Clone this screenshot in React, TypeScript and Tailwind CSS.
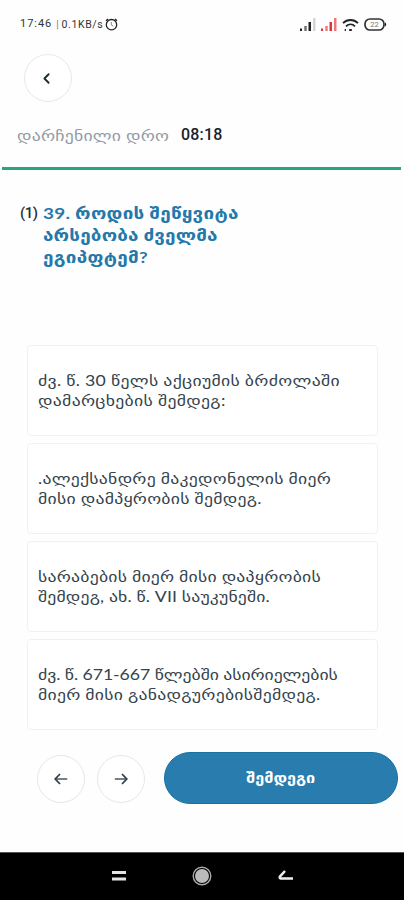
import { ChevronLeft } from "lucide-react";

interface TextLine {
  text: string;
  className: string;
}

const question: TextLine[] = [
  { text: "39. როდის შეწყვიტა", className: "tracking-[0.24px]" },
  { text: "არსებობა ძველმა", className: "tracking-[0.14px]" },
  { text: "ეგიპფტემ?", className: "tracking-[0.24px]" },
];

const answers: TextLine[][] = [
  [
    { text: "ძვ. წ. 30 წელს აქციუმის ბრძოლაში", className: "tracking-[0.26px]" },
    { text: "დამარცხების შემდეგ:", className: "tracking-[0.26px]" },
  ],
  [
    { text: ".ალექსანდრე მაკედონელის მიერ", className: "tracking-[0.22px]" },
    { text: "მისი დამპყრობის შემდეგ.", className: "tracking-[0.22px]" },
  ],
  [
    { text: "სარაბების მიერ მისი დაპყრობის", className: "tracking-[0.2px]" },
    { text: "შემდეგ, ახ. წ. VII საუკუნეში.", className: "tracking-[0.13px]" },
  ],
  [
    { text: "ძვ. წ. 671-667 წლებში ასირიელების", className: "tracking-[-0.05px]" },
    { text: "მიერ მისი განადგურებისშემდეგ.", className: "tracking-[0.22px]" },
  ],
];

function StatusBar() {
  return (
    <div className="flex h-[49px] items-center justify-between pr-[17px] pl-5 font-['Roboto','Liberation_Sans',sans-serif] text-[#333]">
      <div className="flex items-center text-[11px] whitespace-nowrap">
        <span className="tracking-[0.95px]">17:46</span>
        <span className="mr-[3px] ml-[4px] text-[10px] text-[#777]">|</span>
        <span className="text-[10.5px] tracking-[0.6px]">0.1KB/s</span>
        <svg className="ml-[2px]" width="13" height="13" viewBox="0 0 13 13" fill="none" stroke="#222" strokeWidth="1.3">
          <circle cx="6.5" cy="6.7" r="5.2" />
          <path d="M1 2.8 3 1M12 2.8 10 1" />
          <path d="M6.3 4v3l2 1" stroke="#888" strokeWidth="1" />
        </svg>
      </div>
      <div className="flex items-center">
        <SignalIcon color="#222" last="#d4d4d4" />
        <SignalIcon color="#df3438" last="#ee7779" />
        <svg className="mr-[5px]" width="17" height="14" viewBox="0 0 17 14" fill="none" stroke="#222" strokeWidth="1.8">
          <path d="M1 5.2c4.2-4.3 10.8-4.3 15 0M4 8.3c2.7-2.7 6.3-2.7 9 0" />
          <path d="M7.2 12h2.6M2.7 12h1.3" />
        </svg>
        <svg width="23" height="13" viewBox="0 0 23 13">
          <rect x="1" y="1" width="19" height="11" rx="5" fill="none" stroke="#333" strokeWidth="1.7" />
          <path d="M21 4.5c1.7.7 1.7 3.3 0 4z" fill="#222" />
          <text x="10.5" y="9" textAnchor="middle" fontSize="7.5" fill="#777">
            22
          </text>
        </svg>
      </div>
    </div>
  );
}

function SignalIcon({ color, last }: { color: string; last: string }) {
  return (
    <svg className="mr-[5px]" width="16" height="13" viewBox="0 0 16 13" fill={color}>
      <path d="M0 10.5h2V13H0zM8.5 4H11v9H8.5z" />
      <path d="M4.3 8h2.4v5H4.3z" opacity="0.65" />
      <path d="M13 0h2.5v13H13z" fill={last} />
    </svg>
  );
}

function ArrowIcon({ className }: { className?: string }) {
  return (
    <svg className={className} width="14" height="12" viewBox="0 0 14 12" fill="none" stroke="#2d3e48">
      <path d="M13.2 6H1.5" strokeWidth="1.3" />
      <path d="M6 1 1.2 6 6 11" strokeWidth="1.7" />
    </svg>
  );
}

function Lines({ lines }: { lines: TextLine[] }) {
  return (
    <>
      {lines.map((line) => (
        <span key={line.text} className={`block w-max origin-left scale-x-[1.18] whitespace-nowrap ${line.className}`}>
          {line.text}
        </span>
      ))}
    </>
  );
}

export default function App() {
  return (
    <div className="flex h-[900px] w-[404px] flex-col overflow-hidden bg-[#fefefe] font-['Lato','DejaVu_Sans',sans-serif]">
      <StatusBar />

      {/* Header */}
      <header className="h-[118px] pt-[5px]">
        <button className="ml-6 flex size-12 items-center justify-center rounded-full border border-[#e8e8e8] bg-white">
          <ChevronLeft className="mr-[3px] size-[17px] text-[#172b36]" strokeWidth={2.6} />
        </button>
        <div className="mt-[21px] flex h-6 items-center pl-[17px] whitespace-nowrap">
          <div className="w-[164px] text-[15px] text-[#929ba5]">
            <span className="block w-max origin-left scale-x-[1.18] tracking-[0.19px]">დარჩენილი დრო</span>
          </div>
          <span className="font-['Roboto',sans-serif] text-[16px] font-medium tracking-[0.2px] text-[#18222b]">08:18</span>
        </div>
      </header>
      <div className="mr-[3px] ml-[2px] h-[3px] shrink-0 bg-[#24a77c]" />

      {/* Question */}
      <main className="h-[582px] shrink-0">
        <div className="flex h-[175px] pt-8 pl-5 text-[16px] leading-[22px] font-bold">
          <span className="w-[23px] shrink-0 font-['Roboto',sans-serif] text-[15px] font-medium tracking-[-0.5px] text-[#25313a]">
            (1)
          </span>
          <h1 className="text-[#2478aa]">
            <Lines lines={question} />
          </h1>
        </div>
        <div className="flex flex-col gap-[7px] pl-[27px]">
          {answers.map((answer) => (
            <button
              key={answer[0].text}
              className="flex h-[91px] w-[351px] flex-col items-start justify-center rounded-[4px] border-[1.5px] border-[#f0f2f2] bg-white pb-px pl-[10px] text-left text-[15px] leading-5 text-[#34434c]"
            >
              <Lines lines={answer} />
            </button>
          ))}
        </div>
      </main>

      {/* Question navigation */}
      <div className="flex h-[100px] shrink-0 items-start pl-[37px]">
        <button className="mt-[3px] flex size-12 items-center justify-center rounded-full border border-[#e6e8e8] bg-white">
          <ArrowIcon />
        </button>
        <button className="mt-[3px] ml-3 flex size-12 items-center justify-center rounded-full border border-[#e6e8e8] bg-white">
          <ArrowIcon className="rotate-180" />
        </button>
        <button className="ml-[19px] flex h-[52px] w-[234px] items-center justify-center rounded-full border border-[#1773a5] bg-[#297dae] pb-[2px] text-[14px] font-bold text-white">
          <span className="scale-x-[1.16]">შემდეგი</span>
        </button>
      </div>

      {/* System navigation */}
      <nav className="flex h-12 shrink-0 items-center border-t border-[#555] bg-black pb-[2px] pl-[112px]">
        <svg width="14" height="12" viewBox="0 0 14 12" fill="#e5e5e5">
          <path d="M0 1h14v3H0zM0 7.5h14v3H0z" />
        </svg>
        <svg className="ml-[66px]" width="20" height="20" viewBox="0 0 20 20">
          <circle cx="10" cy="10" r="8.8" fill="none" stroke="#aaa" strokeWidth="1.4" />
          <circle cx="10" cy="10" r="7" fill="#bbb" />
        </svg>
        <svg className="ml-[66px]" width="16" height="12" viewBox="0 0 16 12" fill="none" stroke="#eee" strokeWidth="2.6">
          <path d="M7 1 2 6.5Q1 8.5 4 8.5h11" />
        </svg>
      </nav>
    </div>
  );
}
